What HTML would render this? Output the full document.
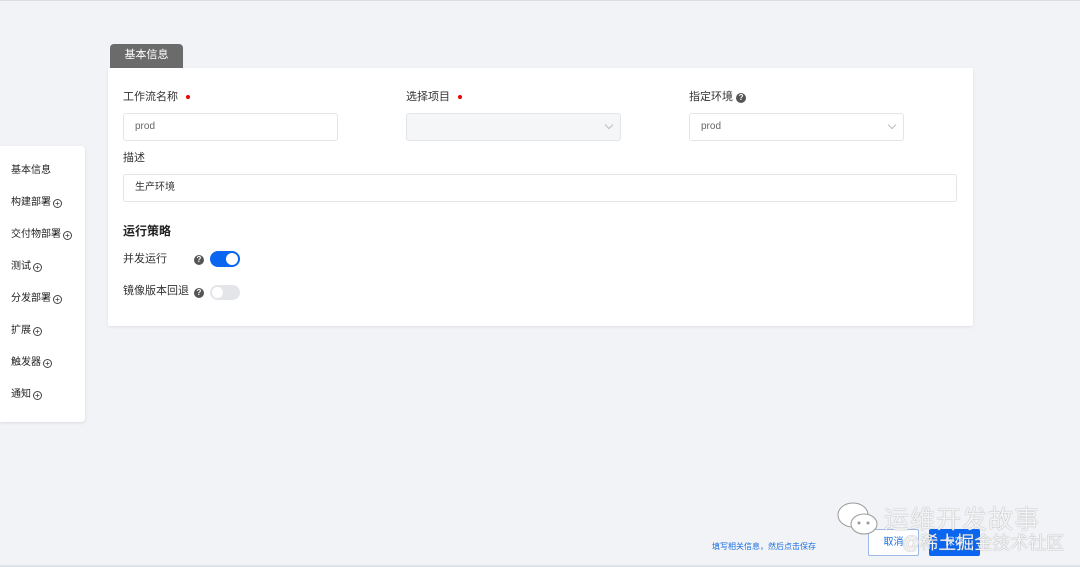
<!DOCTYPE html>
<html><head><meta charset="utf-8"><style>
*{box-sizing:border-box;margin:0;padding:0}
body{width:1080px;height:567px;background:#f1f3f7;font-family:"Liberation Sans","Noto Sans CJK SC",sans-serif;position:relative;overflow:hidden;color:#333;font-size:11px}
.abs{position:absolute}
.tab{left:110px;top:44px;width:73px;height:25px;background:#6b6b6b;color:#fff;border-radius:4px 4px 0 0;font-size:11px;text-align:center;line-height:22px}
.card{left:108px;top:68px;width:865px;height:258px;background:#fff;border-radius:2px;box-shadow:0 1px 3px rgba(0,0,0,.08)}
.lbl{font-size:11px;color:#333;line-height:13px}
.dot{display:inline-block;width:4px;height:4px;border-radius:50%;background:#e00;margin-left:8px;vertical-align:middle}
.inp{height:28px;border:1px solid #e3e5e9;border-radius:3px;background:#fff;font-size:10px;color:#666;padding-left:11px;line-height:26px}
.chev{position:absolute;right:8px;top:8px;width:6px;height:6px;border-right:1px solid #bbb;border-bottom:1px solid #bbb;transform:rotate(45deg)}
.q{display:inline-block;width:10px;height:10px;border-radius:50%;background:#555;color:#fff;font-size:8px;text-align:center;line-height:10px;font-weight:bold}
.side{left:0;top:146px;width:85px;height:276px;background:#fff;border-radius:0 4px 4px 0;box-shadow:0 1px 3px rgba(0,0,0,.1)}
.side div{position:absolute;left:11px;font-size:10px;color:#222;line-height:12px;display:flex;align-items:center}
.pl{display:inline-block;width:9px;height:9px;border:1px solid #444;border-radius:50%;font-size:8px;line-height:7px;text-align:center;margin-left:2px}
</style></head><body>
<div class="abs" style="left:0;top:0;width:1080px;height:1px;background:#ddd"></div>
<div class="abs tab">基本信息</div>
<div class="abs card"></div>
<div class="abs lbl" style="left:123px;top:91px">工作流名称<span class="dot"></span></div>
<div class="abs lbl" style="left:406px;top:91px">选择项目<span class="dot"></span></div>
<div class="abs lbl" style="left:689px;top:91px">指定环境 <span class="q">?</span></div>
<div class="abs inp" style="left:123px;top:113px;width:215px">prod</div>
<div class="abs inp" style="left:406px;top:113px;width:215px;background:#f5f6f8"><span class="chev"></span></div>
<div class="abs inp" style="left:689px;top:113px;width:215px">prod<span class="chev"></span></div>
<div class="abs lbl" style="left:123px;top:152px">描述</div>
<div class="abs inp" style="left:123px;top:174px;width:834px;color:#333">生产环境</div>
<div class="abs" style="left:123px;top:222px;font-size:12px;font-weight:bold;color:#222">运行策略</div>
<div class="abs lbl" style="left:123px;top:253px">并发运行</div>
<div class="abs q" style="left:194px;top:255px">?</div>
<div class="abs" style="left:210px;top:251px;width:30px;height:16px;border-radius:8px;background:#0a66f0"><div style="position:absolute;right:2px;top:2px;width:12px;height:12px;border-radius:50%;background:#fff"></div></div>
<div class="abs lbl" style="left:123px;top:285px">镜像版本回退</div>
<div class="abs q" style="left:194px;top:288px">?</div>
<div class="abs" style="left:210px;top:285px;width:30px;height:15px;border-radius:8px;background:#e3e5e9"><div style="position:absolute;left:2px;top:2px;width:11px;height:11px;border-radius:50%;background:#fff"></div></div>
<div class="abs side">
<div style="top:19px">基本信息</div>
<div style="top:51px">构建部署<span class="pl">+</span></div>
<div style="top:83px">交付物部署<span class="pl">+</span></div>
<div style="top:115px">测试<span class="pl">+</span></div>
<div style="top:147px">分发部署<span class="pl">+</span></div>
<div style="top:179px">扩展<span class="pl">+</span></div>
<div style="top:211px">触发器<span class="pl">+</span></div>
<div style="top:243px">通知<span class="pl">+</span></div>
</div>
<div class="abs" style="left:712px;top:541px;font-size:8px;color:#1a6fe0">填写相关信息，然后点击保存</div>
<div class="abs" style="left:868px;top:529px;width:51px;height:27px;border:1px solid #9ab8e8;border-radius:2px;background:#fff;color:#1a6fe0;font-size:10px;text-align:center;line-height:25px">取消</div>
<div class="abs" style="left:929px;top:529px;width:51px;height:27px;background:#0a66f0;border-radius:2px;color:#fff;font-size:10px;text-align:center;line-height:27px">保存</div>
<svg class="abs" style="left:836px;top:500px" width="46" height="40" viewBox="0 0 46 40"><ellipse cx="17" cy="15" rx="15" ry="12" fill="#fff" stroke="#999" stroke-width="1"/><ellipse cx="28" cy="24" rx="13" ry="10" fill="#fff" stroke="#999" stroke-width="1"/><circle cx="23" cy="23" r="1.5" fill="#999"/><circle cx="32" cy="23" r="1.5" fill="#999"/></svg>
<div class="abs" style="left:884px;top:500px;font-size:25px;color:rgba(255,255,255,.9);letter-spacing:1px;text-shadow:0 0 1px #777">运维开发故事</div>
<div class="abs" style="left:902px;top:529px;font-size:18px;color:rgba(255,255,255,.9);text-shadow:0 0 1px #777">@稀土掘金技术社区</div>
<div class="abs" style="left:0;top:565px;width:1080px;height:2px;background:#dde1e8"></div>
</body></html>
